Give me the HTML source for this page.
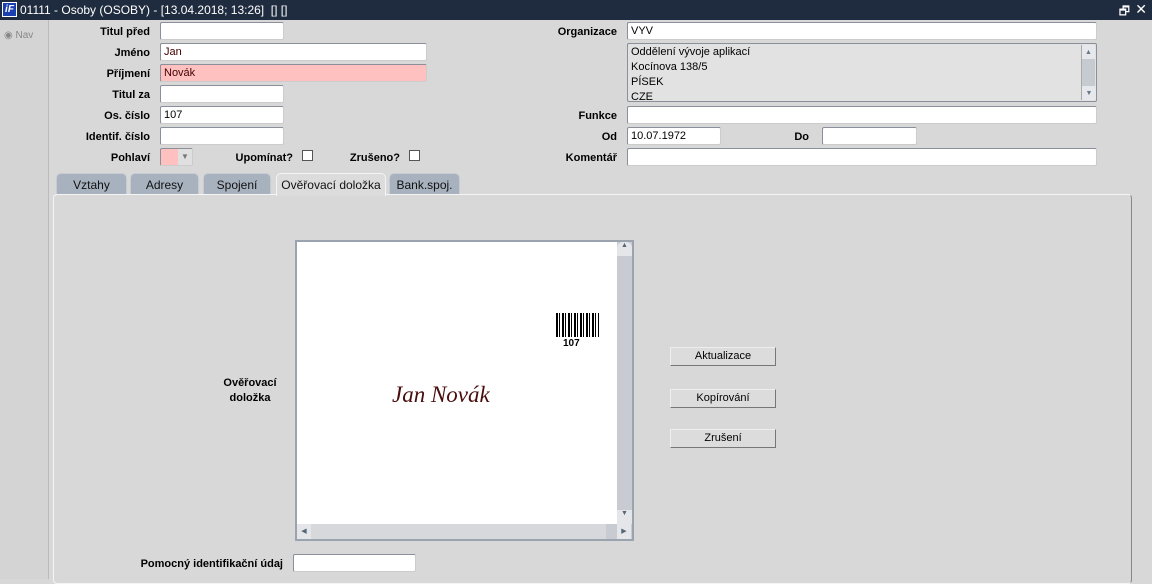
<!DOCTYPE html>
<html><head><meta charset="utf-8"><style>
*{box-sizing:border-box;margin:0;padding:0}
body{width:1152px;height:579px;background:#d8d8d8;font-family:"Liberation Sans",Arial,sans-serif;font-size:11px;position:relative;overflow:hidden;color:#000}
.a{position:absolute}
.tb{left:0;top:0;width:1152px;height:20px;background:#1f2b3e;color:#fff;font-size:12px;line-height:20px;padding-left:20px}
.lbl{position:absolute;font-weight:bold;font-size:11px;text-align:right;line-height:17px;margin-top:2px}
.in{position:absolute;background:#fff;border:1px solid #8a8f99;border-right-color:#ccc;border-bottom-color:#ccc;height:18px;line-height:16px;padding-left:3px;font-size:11px;border-radius:2px}
.cb{position:absolute;width:11px;height:11px;background:#fff;border:1px solid #555}
.tab{position:absolute;top:173px;height:22px;background:#a8b2bf;border:1px solid #c8ccd2;border-bottom:none;border-radius:5px 5px 0 0;text-align:center;line-height:22px;font-size:12px;color:#111}
.btn{position:absolute;left:670px;width:106px;height:19px;background:#dcdcdc;border:1px solid #777;border-top-color:#eee;border-left-color:#eee;text-align:center;line-height:17px;font-size:11px}
</style></head><body>
<div class="a tb">01111 - Osoby (OSOBY) - [13.04.2018; 13:26] &nbsp;[] []</div>
<div class="a" style="left:2px;top:2px;width:15px;height:15px;background:#1a3fb0;border:1px solid #fff;color:#fff;font-size:10px;font-weight:bold;font-style:italic;line-height:13px;text-align:center">iF</div>
<div class="a" style="right:22px;top:2px;color:#fff;font-size:12px">🗗</div>
<div class="a" style="right:5px;top:1px;color:#fff;font-size:14px">✕</div>
<div class="a" style="left:0;top:20px;width:49px;height:559px;background:#d4d4d4;border-right:1px solid #bbb"></div>
<div class="a" style="left:4px;top:30px;color:#888;font-size:10px">◉ Nav</div>

<div class="lbl" style="left:60px;width:90px;top:22px">Titul před</div>
<div class="in" style="left:160px;top:22px;width:124px"></div>
<div class="lbl" style="left:60px;width:90px;top:43px">Jméno</div>
<div class="in" style="left:160px;top:43px;width:267px;color:#400">Jan</div>
<div class="lbl" style="left:60px;width:90px;top:64px">Příjmení</div>
<div class="in" style="left:160px;top:64px;width:267px;background:#ffc0c0;color:#400">Novák</div>
<div class="lbl" style="left:60px;width:90px;top:85px">Titul za</div>
<div class="in" style="left:160px;top:85px;width:124px"></div>
<div class="lbl" style="left:60px;width:90px;top:106px">Os. číslo</div>
<div class="in" style="left:160px;top:106px;width:124px">107</div>
<div class="lbl" style="left:60px;width:90px;top:127px">Identif. číslo</div>
<div class="in" style="left:160px;top:127px;width:124px"></div>
<div class="lbl" style="left:60px;width:90px;top:148px">Pohlaví</div>
<div class="in" style="left:160px;top:148px;width:33px;background:#ffc0c0;padding:0"><div style="position:absolute;right:0;top:0;width:14px;height:16px;background:#e0e0e0;color:#777;font-size:8px;text-align:center;line-height:16px">▼</div></div>
<div class="lbl" style="left:200px;width:93px;top:148px">Upomínat?</div>
<div class="cb" style="left:302px;top:150px"></div>
<div class="lbl" style="left:320px;width:80px;top:148px">Zrušeno?</div>
<div class="cb" style="left:409px;top:150px"></div>

<div class="lbl" style="left:520px;width:97px;top:22px">Organizace</div>
<div class="in" style="left:627px;top:22px;width:470px">VYV</div>
<div class="a" style="left:627px;top:43px;width:470px;height:59px;background:#e2e2e2;border:1px solid #8a8f99;border-radius:2px;overflow:hidden;line-height:15px;padding:1px 3px;font-size:11px">Oddělení vývoje aplikací<br>Kocínova 138/5<br>PÍSEK<br>CZE
<div style="position:absolute;right:1px;top:1px;width:14px;height:55px;background:#c6cbd2;border-left:1px solid #aaa"><div style="height:14px;background:#e6e8ec;font-size:7px;text-align:center;color:#678">▲</div><div style="position:absolute;bottom:0;height:14px;width:14px;background:#e6e8ec;font-size:7px;text-align:center;color:#678">▼</div></div></div>
<div class="lbl" style="left:520px;width:97px;top:106px">Funkce</div>
<div class="in" style="left:627px;top:106px;width:470px"></div>
<div class="lbl" style="left:520px;width:97px;top:127px">Od</div>
<div class="in" style="left:627px;top:127px;width:94px">10.07.1972</div>
<div class="lbl" style="left:780px;width:29px;top:127px">Do</div>
<div class="in" style="left:822px;top:127px;width:95px"></div>
<div class="lbl" style="left:520px;width:97px;top:148px">Komentář</div>
<div class="in" style="left:627px;top:148px;width:470px"></div>

<div class="tab" style="left:56px;width:71px">Vztahy</div>
<div class="tab" style="left:130px;width:69px">Adresy</div>
<div class="tab" style="left:203px;width:68px">Spojení</div>
<div class="tab" style="left:389px;width:71px">Bank.spoj.</div>
<div class="a" style="left:53px;top:194px;width:1079px;height:390px;border:1px solid #f4f4f4;border-right-color:#888;border-radius:4px;background:#d8d8d8"></div>
<div class="tab" style="left:276px;width:110px;background:#dcdcdc;border-color:#f4f4f4;height:23px">Ověřovací doložka</div>

<div class="lbl" style="left:200px;width:100px;top:374px;text-align:center;line-height:15px">Ověřovací<br>doložka</div>
<div class="a" style="left:295px;top:240px;width:339px;height:301px;background:#fff;border:2px solid #9aa3ae"></div>
<div class="a" style="left:617px;top:242px;width:15px;height:282px;background:#c8ccd2"><div style="height:14px;background:#e4e6ea;font-size:7px;text-align:center;color:#567;border-radius:6px 6px 0 0">▲</div><div style="position:absolute;bottom:0;width:15px;height:14px;background:#e4e6ea;font-size:7px;text-align:center;color:#567">▼</div></div>
<div class="a" style="left:297px;top:524px;width:335px;height:15px;background:#c8ccd2"><div style="position:absolute;left:0;width:14px;height:15px;background:#e4e6ea;font-size:7px;line-height:15px;text-align:center;color:#567">◀</div><div style="position:absolute;left:14px;width:295px;height:15px;background:#d6d8dc"></div><div style="position:absolute;left:320px;width:14px;height:15px;background:#e4e6ea;font-size:7px;line-height:15px;text-align:center;color:#567">▶</div></div>
<div class="a" style="left:556px;top:313px;width:43px;height:24px;background:repeating-linear-gradient(90deg,#000 0 2px,#fff 2px 3px,#000 3px 4px,#fff 4px 6px)"></div>
<div class="a" style="left:563px;top:338px;font-weight:bold;font-size:10px">107</div>
<div class="a" style="left:392px;top:382px;font-family:'Liberation Serif',serif;font-style:italic;font-size:23px;color:#4a0d0d">Jan Novák</div>

<div class="btn" style="top:347px">Aktualizace</div>
<div class="btn" style="top:389px">Kopírování</div>
<div class="btn" style="top:429px">Zrušení</div>

<div class="lbl" style="left:100px;width:183px;top:554px">Pomocný identifikační údaj</div>
<div class="in" style="left:293px;top:554px;width:123px"></div>
</body></html>
